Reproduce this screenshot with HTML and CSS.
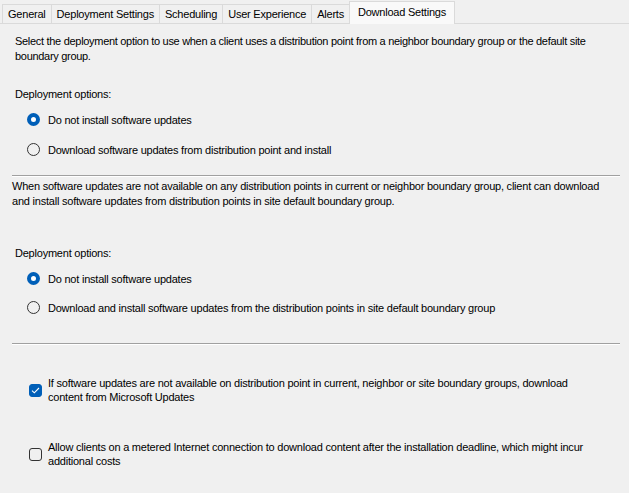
FILE: index.html
```html
<!DOCTYPE html>
<html lang="en">
<head>
    <meta charset="UTF-8">
    <title>Download Settings</title>
    <link rel="stylesheet" href="styles.css">
</head>
<body>
    <div class="tabs">
        <div class="tab">General</div>
        <div class="tab">Deployment Settings</div>
        <div class="tab">Scheduling</div>
        <div class="tab">User Experience</div>
        <div class="tab">Alerts</div>
        <div class="tab active">Download Settings</div>
    </div>
    <div class="page">
        <p class="intro">Select the deployment option to use when a client uses a distribution point from a neighbor boundary group or the default site boundary group.</p>
        <div class="label">Deployment options:</div>
        <div class="options">
            <div class="option"><span class="radio checked"></span>Do not install software updates</div>
            <div class="option"><span class="radio"></span>Download software updates from distribution point and install</div>
        </div>

        <hr class="sep">

        <p class="note">When software updates are not available on any distribution points in current or neighbor boundary group, client can download and install software updates from distribution points in site default boundary group.</p>
        <div class="label second">Deployment options:</div>
        <div class="options narrow">
            <div class="option"><span class="radio checked"></span>Do not install software updates</div>
            <div class="option"><span class="radio"></span>Download and install software updates from the distribution points in site default boundary group</div>
        </div>

        <hr class="sep lower">

        <div class="checks">
            <div class="check-row">
                <span class="box checked">
                    <svg width="9" height="7" viewBox="0 0 9 7"><path d="M1 3.6 L3.3 5.8 L8 1" fill="none" stroke="#fff" stroke-width="1.1"/></svg>
                </span>
                <span class="check-text">If software updates are not available on distribution point in current, neighbor or site boundary groups, download content from Microsoft Updates</span>
            </div>
            <div class="check-row">
                <span class="box"></span>
                <span class="check-text">Allow clients on a metered Internet connection to download content after the installation deadline, which might incur additional costs</span>
            </div>
        </div>
    </div>
</body>
</html>
```

FILE: styles.css
```css
* {
    margin: 0;
    padding: 0;
    box-sizing: border-box;
}
body {
    font-family: 'Liberation Sans', Arial, sans-serif;
    font-size: 11px;
    letter-spacing: -0.22px;
    color: #000;
    background-color: #f0f0f0;
    width: 629px;
    height: 493px;
    overflow: hidden;
}
.tabs {
    display: flex;
    align-items: flex-end;
    height: 24px;
    padding-left: 2px;
    border-bottom: 1px solid #dadada;
}
.tab {
    height: 19px;
    padding: 0 5px;
    line-height: 19px;
    border: 1px solid #dadada;
    border-bottom: none;
    margin-right: -1px;
    background-color: #f0f0f0;
    white-space: nowrap;
}
.tab.active {
    height: 23px;
    line-height: 20px;
    padding: 0 8px;
    background-color: #f9f9f9;
    margin-bottom: -1px;
}
.page {
    padding: 0 9px 0 12px;
}
.intro {
    margin-top: 10px;
    padding-left: 3px;
    line-height: 15px;
    letter-spacing: -0.3px;
}
.label {
    margin-top: 23px;
    padding-left: 3px;
    line-height: 15px;
}
.options {
    display: flex;
    flex-direction: column;
    gap: 15px;
    margin-top: 10px;
    padding-left: 15px;
}
.option {
    display: flex;
    align-items: center;
    gap: 8px;
    height: 15px;
}
.radio {
    width: 13px;
    height: 13px;
    border-radius: 50%;
    border: 1px solid #333;
    background-color: #f0f0f0;
    flex-shrink: 0;
}
.radio.checked {
    border: 4px solid #005fb8;
    background-color: #fff;
}
.sep {
    border: none;
    border-top: 1px solid #a0a0a0;
    border-bottom: 1px solid #fff;
    margin-top: 18px;
}
.note {
    margin-top: 2px;
    padding-right: 12px;
    line-height: 15px;
}
.label.second {
    margin-top: 37px;
}
.options.narrow {
    margin-top: 10px;
    gap: 14px;
}
.sep.lower {
    margin-top: 28px;
}
.checks {
    display: flex;
    flex-direction: column;
    gap: 36px;
    margin-top: 31px;
    padding-left: 17px;
}
.check-row {
    display: flex;
    align-items: center;
    gap: 6px;
}
.box {
    width: 13px;
    height: 13px;
    border: 1px solid #333;
    border-radius: 3px;
    flex-shrink: 0;
    display: flex;
    align-items: center;
    justify-content: center;
}
.box.checked {
    background-color: #005fb8;
    border-color: #005fb8;
}
.check-text {
    width: 555px;
    line-height: 14px;
}
```
